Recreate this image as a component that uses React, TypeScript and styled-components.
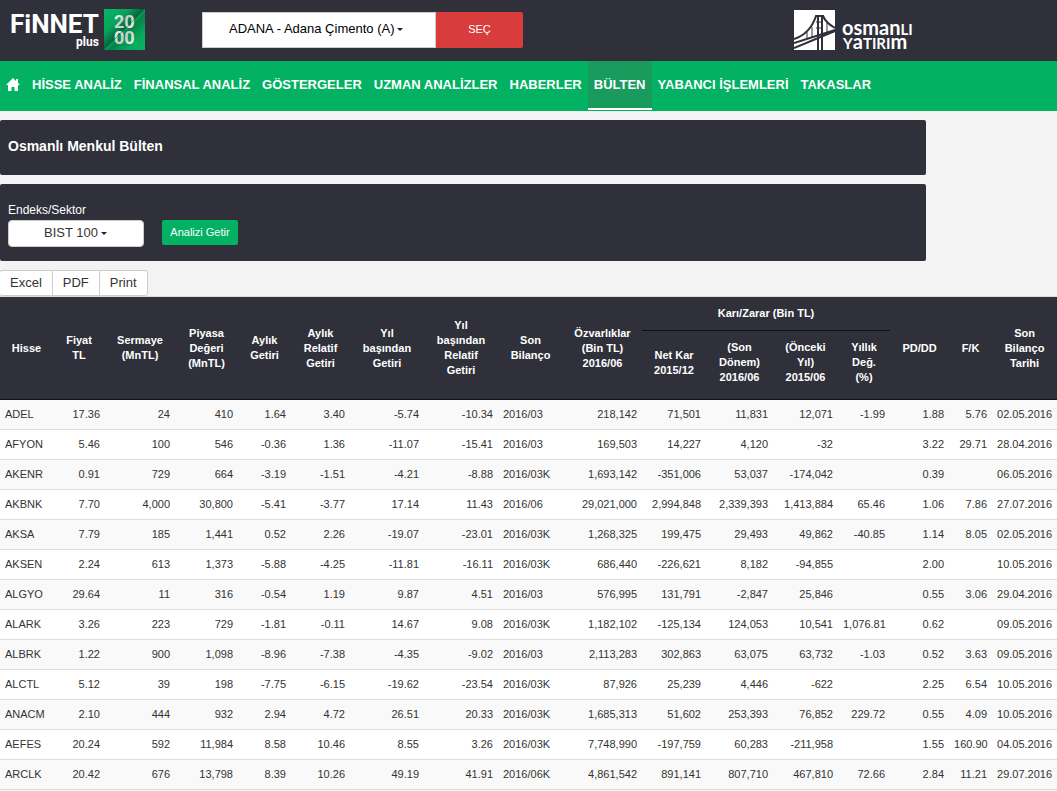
import React from "react";
import styled, { createGlobalStyle } from "styled-components";

const GlobalStyle = createGlobalStyle`
  * { box-sizing: border-box; }
  body {
    margin: 0;
    background: #f3f3f3;
    color: #333;
    font-family: "Liberation Sans", Arial, sans-serif;
    font-size: 12px;
  }
  button, select, input { font-family: inherit; }
`;

const Header = styled.header`
  display: flex;
  align-items: flex-start;
  height: 61px;
  padding: 0 141px 0 11px;
  background: #30303a;
`;

const FinnetLogo = styled.svg`
  flex: none;
  margin-top: 8px;
`;

const SponsorLogo = styled.svg`
  flex: none;
  margin: 10px 0 0 auto;
`;

const StockForm = styled.form`
  display: flex;
  height: 36px;
  margin: 12px 0 0 57px;
`;

const SelectBox = styled.div<{ $width: number; $height: number; $round?: boolean; $pad: number; $color: string }>`
  position: relative;
  width: ${(p) => p.$width}px;
  height: ${(p) => p.$height}px;
  select {
    appearance: none;
    width: 100%;
    height: 100%;
    margin: 0;
    padding: 0 0 3px ${(p) => p.$pad}px;
    border: 1px solid #ccc;
    border-radius: ${(p) => (p.$round ? "4px" : "0")};
    background: #fff;
    color: ${(p) => p.$color};
    font-size: 13px;
  }
`;

const Caret = styled.span<{ $left: number }>`
  position: absolute;
  left: ${(p) => p.$left}px;
  top: calc(50% - 2px);
  border-top: 3px solid #222;
  border-left: 3px solid transparent;
  border-right: 3px solid transparent;
  pointer-events: none;
`;

const PickButton = styled.button`
  width: 87px;
  padding: 0 6px 2px;
  border: 0;
  border-radius: 0 2px 2px 0;
  background: #d83c3d;
  color: #fff;
  font-size: 11px;
`;

const Nav = styled.nav`
  display: flex;
  height: 50px;
  background: #03b162;
`;

const NavLink = styled.a<{ $active?: boolean }>`
  display: flex;
  align-items: center;
  height: 49px;
  padding: 0 6px;
  border-bottom: 2px solid ${(p) => (p.$active ? "#fff" : "transparent")};
  background: ${(p) => (p.$active ? "#189b5d" : "#03b162")};
  color: #fff;
  font-size: 13px;
  font-weight: bold;
  text-decoration: none;
  white-space: nowrap;
`;

const Panel = styled.section<{ $height: number }>`
  width: calc(100% - 131px);
  min-height: ${(p) => p.$height}px;
  margin-top: 9px;
  padding: 18px 8px 14px;
  border-radius: 2px;
  background: #30303a;
  color: #fff;
`;

const Title = styled.h1`
  margin: 0;
  font-size: 14px;
  line-height: 16px;
`;

const FilterForm = styled.form`
  display: flex;
  gap: 18px;
  align-items: flex-end;
`;

const FilterField = styled.div`
  display: flex;
  flex-direction: column;
  gap: 2px;
  label { line-height: 16px; }
`;

const RunButton = styled.button`
  width: 76px;
  height: 25px;
  margin-bottom: 2px;
  padding: 0 0 2px;
  border: 0;
  border-radius: 2px;
  background: #03b162;
  color: #fff;
  font-size: 11px;
`;

const ExportGroup = styled.div`
  display: flex;
  margin: 9px 0 0 -1px;
`;

const ExportButton = styled.button`
  height: 26px;
  margin-right: -1px;
  padding: 0 10px 1px;
  border: 1px solid #ccc;
  background: #fff;
  color: #333;
  font-size: 13px;
  &:first-child { border-radius: 3px 0 0 3px; }
  &:last-child { border-radius: 0 3px 3px 0; }
`;

const Table = styled.table`
  width: 100%;
  min-width: 1000px;
  table-layout: fixed;
  border-collapse: separate;
  border-spacing: 0;
  border-top: 1px solid #ddd;
  font-size: 11px;
`;

const HeadCell = styled.th<{ $kind?: "group" | "sub" }>`
  height: ${(p) => (p.$kind === "group" ? 34 : p.$kind === "sub" ? 69 : 103)}px;
  padding: ${(p) => (p.$kind === "sub" ? "0 4px 5px" : "1px 4px")};
  border-bottom: 1px solid #111;
  background: #30303a;
  color: #fff;
  line-height: 15px;
  white-space: pre-line;
`;

const Row = styled.tr`
  background: #fff;
  &:nth-child(odd) { background: #f9f9f9; }
`;

const Cell = styled.td<{ $left?: boolean }>`
  height: 30px;
  padding: 0 5px 1px;
  border-bottom: 1px solid #ddd;
  text-align: ${(p) => (p.$left ? "left" : "right")};
  white-space: nowrap;
`;

const navItems = [
  "HİSSE ANALİZ",
  "FİNANSAL ANALİZ",
  "GÖSTERGELER",
  "UZMAN ANALİZLER",
  "HABERLER",
  "BÜLTEN",
  "YABANCI İŞLEMLERİ",
  "TAKASLAR",
];

const columnWidths = [53, 52, 70, 63, 53, 59, 74, 74, 65, 79, 64, 67, 65, 52, 59, 43, 65];

const leadHeads = [
  "Hisse",
  "Fiyat\nTL",
  "Sermaye\n(MnTL)",
  "Piyasa\nDeğeri\n(MnTL)",
  "Aylık\nGetiri",
  "Aylık\nRelatif\nGetiri",
  "Yıl\nbaşından\nGetiri",
  "Yıl\nbaşından\nRelatif\nGetiri",
  "Son\nBilanço",
  "Özvarlıklar\n(Bin TL)\n2016/06",
];
const subHeads = ["Net Kar\n2015/12", "(Son\nDönem)\n2016/06", "(Önceki\nYıl)\n2015/06", "Yıllık\nDeğ.\n(%)"];
const tailHeads = ["PD/DD", "F/K", "Son\nBilanço\nTarihi"];

const rows = [
  "ADEL|17.36|24|410|1.64|3.40|-5.74|-10.34|2016/03|218,142|71,501|11,831|12,071|-1.99|1.88|5.76|02.05.2016",
  "AFYON|5.46|100|546|-0.36|1.36|-11.07|-15.41|2016/03|169,503|14,227|4,120|-32||3.22|29.71|28.04.2016",
  "AKENR|0.91|729|664|-3.19|-1.51|-4.21|-8.88|2016/03K|1,693,142|-351,006|53,037|-174,042||0.39||06.05.2016",
  "AKBNK|7.70|4,000|30,800|-5.41|-3.77|17.14|11.43|2016/06|29,021,000|2,994,848|2,339,393|1,413,884|65.46|1.06|7.86|27.07.2016",
  "AKSA|7.79|185|1,441|0.52|2.26|-19.07|-23.01|2016/03K|1,268,325|199,475|29,493|49,862|-40.85|1.14|8.05|02.05.2016",
  "AKSEN|2.24|613|1,373|-5.88|-4.25|-11.81|-16.11|2016/03K|686,440|-226,621|8,182|-94,855||2.00||10.05.2016",
  "ALGYO|29.64|11|316|-0.54|1.19|9.87|4.51|2016/03|576,995|131,791|-2,847|25,846||0.55|3.06|29.04.2016",
  "ALARK|3.26|223|729|-1.81|-0.11|14.67|9.08|2016/03K|1,182,102|-125,134|124,053|10,541|1,076.81|0.62||09.05.2016",
  "ALBRK|1.22|900|1,098|-8.96|-7.38|-4.35|-9.02|2016/03|2,113,283|302,863|63,075|63,732|-1.03|0.52|3.63|09.05.2016",
  "ALCTL|5.12|39|198|-7.75|-6.15|-19.62|-23.54|2016/03K|87,926|25,239|4,446|-622||2.25|6.54|10.05.2016",
  "ANACM|2.10|444|932|2.94|4.72|26.51|20.33|2016/03K|1,685,313|51,602|253,393|76,852|229.72|0.55|4.09|10.05.2016",
  "AEFES|20.24|592|11,984|8.58|10.46|8.55|3.26|2016/03K|7,748,990|-197,759|60,283|-211,958||1.55|160.90|04.05.2016",
  "ARCLK|20.42|676|13,798|8.39|10.26|49.19|41.91|2016/06K|4,861,542|891,141|807,710|467,810|72.66|2.84|11.21|29.07.2016",
].map((line) => line.split("|"));

function Finnet() {
  return (
    <FinnetLogo width="134" height="43" viewBox="0 0 134 43" role="img" aria-label="Finnet plus 2000">
      <defs>
        <linearGradient id="badge" x1="0" y1="0" x2="1" y2="1">
          <stop offset="0" stopColor="#08b566" />
          <stop offset="0.3" stopColor="#09a45c" />
          <stop offset="0.49" stopColor="#06653a" />
          <stop offset="0.51" stopColor="#0a9a58" />
          <stop offset="0.56" stopColor="#07824a" />
          <stop offset="0.8" stopColor="#06ac60" />
          <stop offset="1" stopColor="#05b264" />
        </linearGradient>
        <linearGradient id="silver" x1="0" y1="0" x2="1" y2="1">
          <stop offset="0" stopColor="#fff" />
          <stop offset="0.5" stopColor="#c3cdc8" />
          <stop offset="1" stopColor="#fff" />
        </linearGradient>
      </defs>
      <g fill="#fff" fontFamily="Roboto, sans-serif" fontWeight="700">
        <text x="-1" y="25" fontSize="26">FiNNET</text>
        <text x="65" y="38" fontSize="12">plus</text>
      </g>
      <rect x="93" y="1" width="41" height="41" fill="url(#badge)" />
      <g fill="url(#silver)" fontFamily="Roboto, sans-serif" fontWeight="700" fontSize="18">
        <text x="103" y="20">20</text>
        <text x="103" y="36">00</text>
      </g>
      <path d="M93 42 134 1" stroke="#0b7c47" strokeWidth="1" opacity="0.6" />
    </FinnetLogo>
  );
}

function Osmanli() {
  return (
    <SponsorLogo width="122" height="42" viewBox="0 0 122 42" role="img" aria-label="Osmanlı Yatırım">
      <rect width="41" height="40" fill="#fff" />
      <g fill="none" stroke="#30303a">
        <path d="M0 29Q16 24 22 6L29 6Q32 13 41 18" strokeWidth="2" />
        <path d="M0 33 41 20M0 38 41 21" strokeWidth="2" />
        <path d="M24 6V40M28 6V40" strokeWidth="2" />
        <path d="M18 17V28M13 22V29M33 13V22M22 12H29M22 18H29" strokeWidth="1" />
      </g>
      <g fill="#fff" fontFamily="Lato, sans-serif" fontWeight="700">
        <text x="48" y="25" fontSize="20">
          osman<tspan fontSize="15">LI</tspan>
        </text>
        <text x="49" y="39" fontSize="15">
          Y<tspan fontSize="20">a</tspan>TIRI<tspan fontSize="20">m</tspan>
        </text>
      </g>
    </SponsorLogo>
  );
}

export default function App() {
  return (
    <>
      <GlobalStyle />
      <Header>
        <Finnet />
        <StockForm onSubmit={(e) => e.preventDefault()}>
          <SelectBox $width={234} $height={36} $pad={26} $color="#000">
            <select aria-label="Hisse">
              <option>ADANA - Adana Çimento (A)</option>
            </select>
            <Caret $left={195} />
          </SelectBox>
          <PickButton type="submit">SEÇ</PickButton>
        </StockForm>
        <Osmanli />
      </Header>
      <Nav>
        <NavLink href="#" aria-label="Ana sayfa">
          <svg width="14" height="13" viewBox="0 0 14 13" fill="#fff">
            <path d="M7 0 14 7H12V13H8.500V9H5.500V13H2V7H0ZM10 1H12V5L10 3Z" />
          </svg>
        </NavLink>
        {navItems.map((item) => (
          <NavLink key={item} href="#" $active={item === "BÜLTEN"}>
            {item}
          </NavLink>
        ))}
      </Nav>
      <main>
        <Panel $height={55}>
          <Title>Osmanlı Menkul Bülten</Title>
        </Panel>
        <Panel $height={77}>
          <FilterForm onSubmit={(e) => e.preventDefault()}>
            <FilterField>
              <label htmlFor="sector">Endeks/Sektor</label>
              <SelectBox $width={136} $height={27} $round $pad={35} $color="#333">
                <select id="sector">
                  <option>BIST 100</option>
                </select>
                <Caret $left={93} />
              </SelectBox>
            </FilterField>
            <RunButton type="submit">Analizi Getir</RunButton>
          </FilterForm>
        </Panel>
        <ExportGroup>
          <ExportButton type="button">Excel</ExportButton>
          <ExportButton type="button">PDF</ExportButton>
          <ExportButton type="button">Print</ExportButton>
        </ExportGroup>
        <Table>
          <colgroup>
            {columnWidths.map((width, i) => (
              <col key={i} width={width} />
            ))}
          </colgroup>
          <thead>
            <tr>
              {leadHeads.map((head) => (
                <HeadCell key={head} rowSpan={2} scope="col">{head}</HeadCell>
              ))}
              <HeadCell colSpan={4} scope="colgroup" $kind="group">Karı/Zarar (Bin TL)</HeadCell>
              {tailHeads.map((head) => (
                <HeadCell key={head} rowSpan={2} scope="col">{head}</HeadCell>
              ))}
            </tr>
            <tr>
              {subHeads.map((head) => (
                <HeadCell key={head} scope="col" $kind="sub">{head}</HeadCell>
              ))}
            </tr>
          </thead>
          <tbody>
            {rows.map((row) => (
              <Row key={row[0]}>
                {row.map((value, i) => (
                  <Cell key={i} $left={i === 0 || i === 8}>{value}</Cell>
                ))}
              </Row>
            ))}
          </tbody>
        </Table>
      </main>
    </>
  );
}
